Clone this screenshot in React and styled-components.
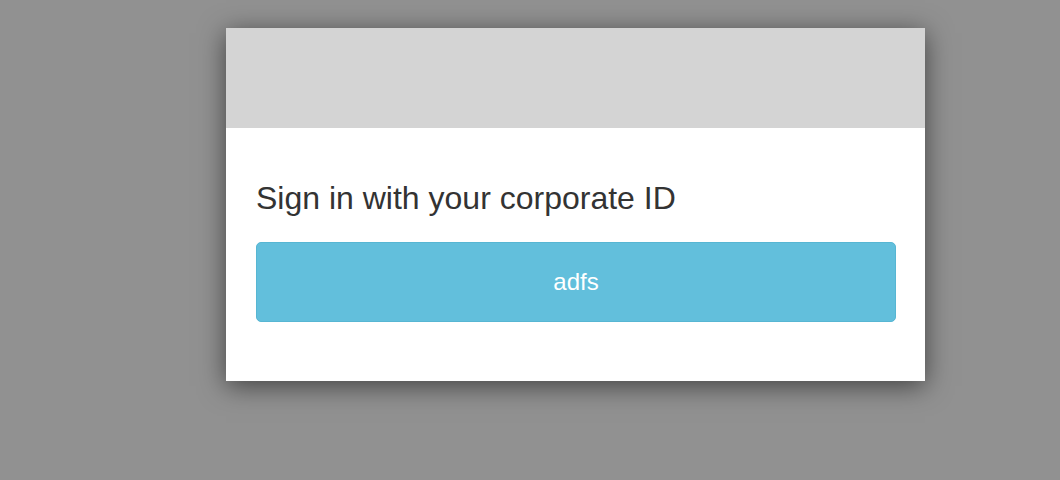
import React from "react";
import styled, { createGlobalStyle } from "styled-components";

const GlobalStyle = createGlobalStyle`
  html, body {
    margin: 0;
    padding: 0;
    background-color: #919191;
    font-family: "Liberation Sans", Arial, sans-serif;
  }
`;

const Page = styled.div`
  width: 1060px;
  height: 480px;
  padding-top: 28px;
  padding-left: 226px;
  box-sizing: border-box;
`;

const Card = styled.div`
  width: 699px;
  background-color: white;
  box-shadow: 0 5px 25px rgba(0, 0, 0, 0.55);
`;

const Header = styled.div`
  height: 100px;
  background-color: #d4d4d4;
`;

const Body = styled.div`
  padding: 52px 29px 59px 30px;
`;

const Title = styled.h2`
  margin: 0 0 26px;
  font-size: 32px;
  font-weight: normal;
  color: #333333;
  line-height: 36px;
`;

const LoginButton = styled.button`
  display: block;
  width: 100%;
  height: 80px;
  border: 1px solid #57b6d3;
  border-radius: 5px;
  background-color: #62bfdc;
  color: white;
  font-family: "Liberation Sans", Arial, sans-serif;
  font-size: 24px;
  cursor: pointer;
`;

function App() {
  return (
    <Page>
      <GlobalStyle />
      <Card>
        <Header />
        <Body>
          <Title>Sign in with your corporate ID</Title>
          <LoginButton>adfs</LoginButton>
        </Body>
      </Card>
    </Page>
  );
}

export default App;
